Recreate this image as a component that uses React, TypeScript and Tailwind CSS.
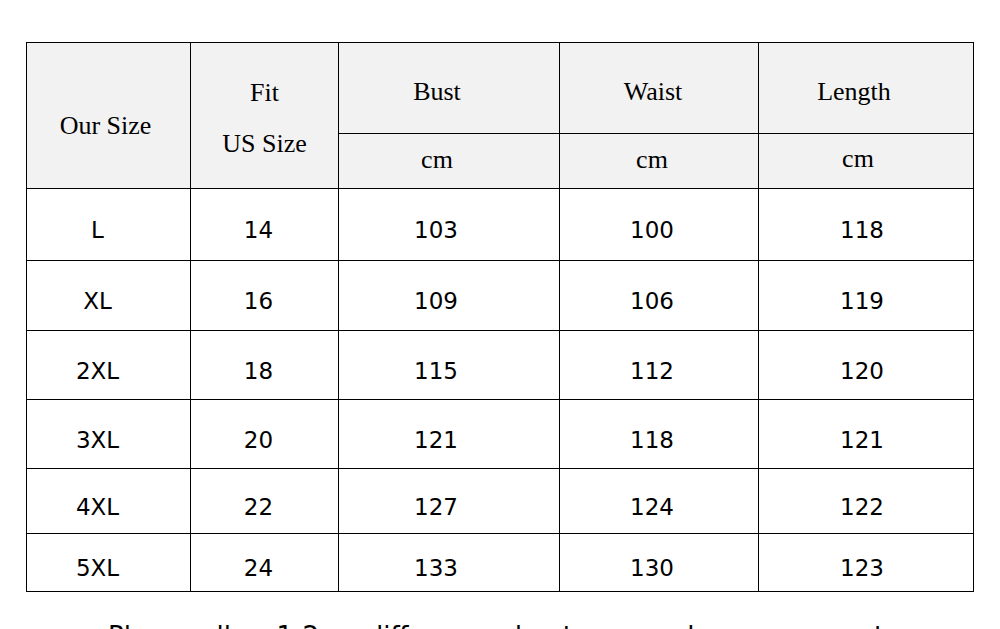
const serif = "font-['Liberation_Serif','DejaVu_Serif',serif]";
const sans = "font-['DejaVu_Sans','Liberation_Sans',sans-serif]";

type Row = { size: string; us: string; bust: string; waist: string; length: string; h: string };

const rows: Row[] = [
  { size: 'L', us: '14', bust: '103', waist: '100', length: '118', h: 'h-[72px]' },
  { size: 'XL', us: '16', bust: '109', waist: '106', length: '119', h: 'h-[70px]' },
  { size: '2XL', us: '18', bust: '115', waist: '112', length: '120', h: 'h-[69px]' },
  { size: '3XL', us: '20', bust: '121', waist: '118', length: '121', h: 'h-[69px]' },
  { size: '4XL', us: '22', bust: '127', waist: '124', length: '122', h: 'h-[65px]' },
  { size: '5XL', us: '24', bust: '133', waist: '130', length: '123', h: 'h-[58px]' },
];

const cell = 'border border-black p-0 text-center align-middle';

export default function App() {
  return (
    <div className="h-[629px] w-[1000px] overflow-hidden bg-white">
      <div className="pl-[26px] pt-[42px]">
        <table className="w-[947px] table-fixed border-collapse text-black">
          <colgroup>
            <col className="w-[164px]" />
            <col className="w-[148px]" />
            <col className="w-[221px]" />
            <col className="w-[199px]" />
            <col className="w-[215px]" />
          </colgroup>
          <thead className={`${serif} bg-[#f2f2f2] text-[26px] font-normal`}>
            <tr className="h-[91px]">
              <th rowSpan={2} className={`${cell} pr-[6px] pt-[20px] font-normal`}>
                Our Size
              </th>
              <th rowSpan={2} className={`${cell} font-normal leading-[52px]`}>
                <div className="pt-[6px]">Fit</div>
                <div className="-mt-[1px]">US Size</div>
              </th>
              <th className={`${cell} pr-[24px] pt-[6px] font-normal`}>Bust</th>
              <th className={`${cell} pr-[12px] pt-[6px] font-normal`}>Waist</th>
              <th className={`${cell} pr-[24px] pt-[6px] font-normal`}>Length</th>
            </tr>
            <tr className="h-[55px]">
              <th className={`${cell} pr-[24px] pb-[4px] font-normal`}>cm</th>
              <th className={`${cell} pr-[14px] pb-[4px] font-normal`}>cm</th>
              <th className={`${cell} pr-[16px] pb-[6px] font-normal`}>cm</th>
            </tr>
          </thead>
          <tbody className={`${sans} text-[23px]`}>
            {rows.map((r) => (
              <tr key={r.size} className={r.h}>
                <td className={`${cell} pr-[22px] pt-[12px]`}>{r.size}</td>
                <td className={`${cell} pr-[12px] pt-[12px]`}>{r.us}</td>
                <td className={`${cell} pr-[26px] pt-[12px]`}>{r.bust}</td>
                <td className={`${cell} pr-[14px] pt-[12px]`}>{r.waist}</td>
                <td className={`${cell} pr-[8px] pt-[12px]`}>{r.length}</td>
              </tr>
            ))}
          </tbody>
        </table>
        <p className={`${sans} mt-[31px] pl-[82px] text-[26px] leading-none text-black`}>
          Please allow 1-2cm difference due to manual measurement
        </p>
      </div>
    </div>
  );
}
